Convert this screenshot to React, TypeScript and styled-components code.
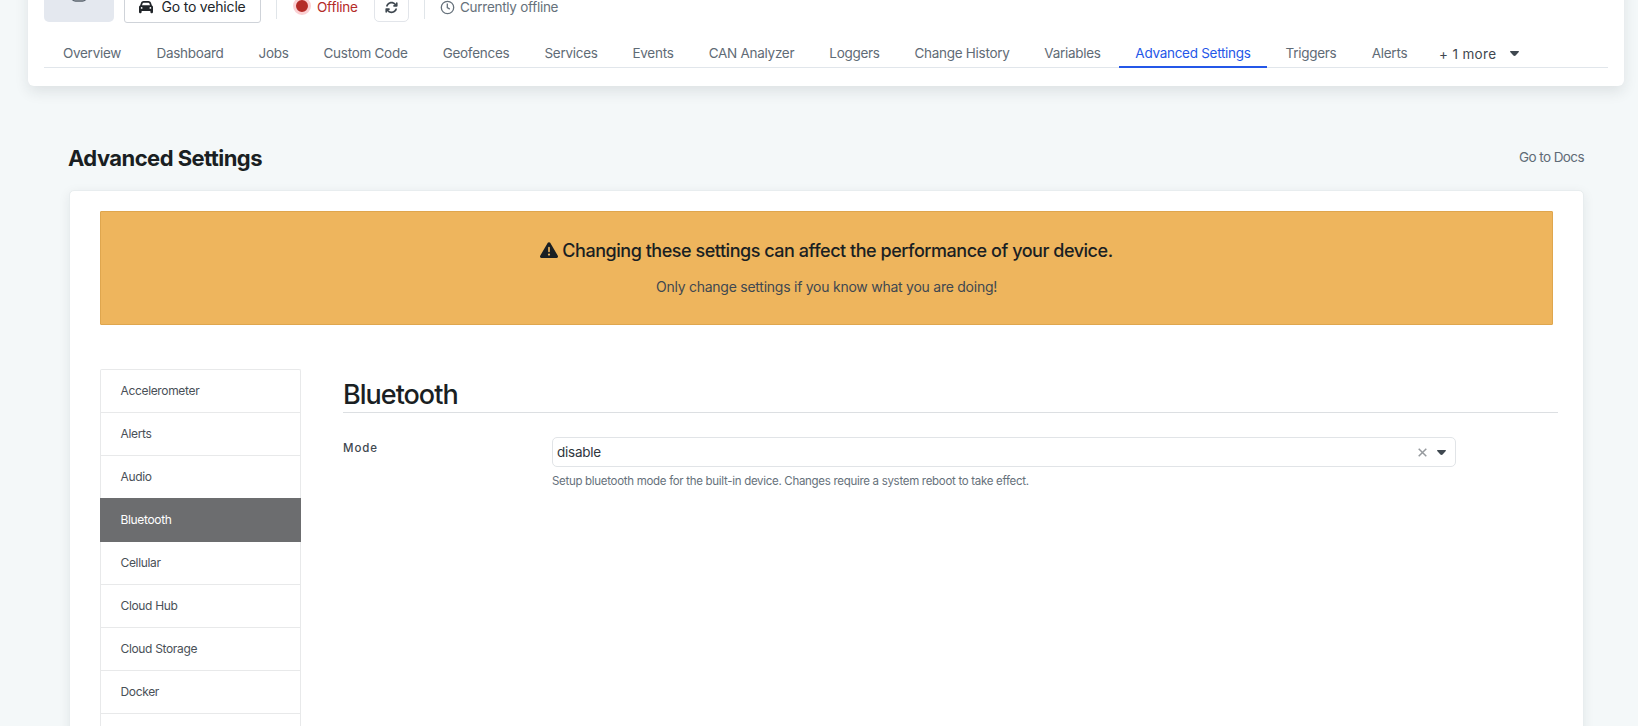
import React from "react";
import styled, { createGlobalStyle } from "styled-components";
import { FaCar, FaTriangleExclamation, FaArrowsRotate } from "react-icons/fa6";

const GlobalStyle = createGlobalStyle`
  * { box-sizing: border-box; }
  html, body { margin: 0; height: 726px; overflow: hidden; }
  body {
    background: #f4f8f9;
    color: #3f4850;
    font-family: Inter, "Liberation Sans", sans-serif;
    font-size: 14px;
  }
  button, a { font: inherit; color: inherit; text-decoration: none; white-space: nowrap; }
`;

const Page = styled.div`
  height: 726px;
  overflow: hidden;
  display: flex;
  flex-direction: column;
`;

const DeviceHeader = styled.header`
  flex: none;
  height: 126px;
  margin: -40px 14px 0 28px;
  padding: 0 16px 18px;
  background: #fff;
  border-radius: 6px;
  box-shadow: 0 6px 14px rgba(30, 40, 45, 0.1);
  display: flex;
  flex-direction: column;
`;

const StatusRow = styled.div`
  display: flex;
  align-items: flex-start;
  height: 63px;
`;

const Avatar = styled.div`
  width: 70px;
  height: 62px;
  border-radius: 5px;
  background: #e4e8ef;
  display: flex;
  justify-content: center;
  padding-top: 22px;
`;

const VehicleButton = styled.button`
  width: 137px;
  height: 33px;
  margin: 30px 0 0 10px;
  padding: 0;
  display: flex;
  align-items: center;
  justify-content: center;
  gap: 8px;
  background: #fff;
  border: 1px solid #cfd3d9;
  border-radius: 3px;
  color: #212529;
  line-height: 14px;
  letter-spacing: -0.18px;
`;

const Divider = styled.span`
  width: 1px;
  height: 40px;
  margin: 19px 0 0 15px;
  background: #e0e5e9;
`;

const Status = styled.div`
  display: flex;
  align-items: center;
  width: 81px;
  height: 20px;
  margin: 37px 0 0 16px;
  color: #b42b27;
  font-size: 13.5px;
  letter-spacing: -0.2px;
`;

const StatusDot = styled.span`
  width: 18px;
  height: 18px;
  margin: -2px 6px 0 0;
  border: 3px solid #fbd0d3;
  border-radius: 50%;
  background: #b42b27;
`;

const RefreshButton = styled.button`
  width: 35px;
  height: 34px;
  margin: 28px 0 0 0;
  padding: 4px 0 0;
  display: flex;
  align-items: center;
  justify-content: center;
  background: #fff;
  border: 1px solid #e2e5ea;
  border-radius: 5px;
  color: #3f4850;
`;

const Connection = styled.div`
  display: flex;
  align-items: center;
  gap: 5px;
  height: 20px;
  margin: 37px 0 0 15px;
  color: #66717b;
  font-size: 13.5px;
  letter-spacing: -0.28px;
`;

const Tabs = styled.nav`
  flex: none;
  display: flex;
  gap: 2px;
  height: 45px;
  padding-left: 2px;
  border-bottom: 1px solid #e1e6eb;
`;

const Tab = styled.a<{ $active?: boolean; $width: number }>`
  width: ${(p) => p.$width}px;
  height: 45px;
  padding-top: 22px;
  font-size: 13.5px;
  line-height: 17px;
  text-align: center;
  letter-spacing: -0.28px;
  color: ${(p) => (p.$active ? "#2457e8" : "#5f6b76")};
  border-bottom: ${(p) => (p.$active ? "2px solid #2457e8" : "0")};
`;

const MoreTab = styled.button`
  display: flex;
  align-items: center;
  gap: 14px;
  height: 17px;
  margin: 22px 0 0 13px;
  padding: 0;
  border: 0;
  background: none;
  color: #3f4850;
  font-size: 13.5px;
  letter-spacing: 0.35px;
`;

const TitleRow = styled.div`
  flex: none;
  display: flex;
  justify-content: space-between;
  align-items: center;
  height: 30px;
  margin: 57px 54px 0 68px;
`;

const PageTitle = styled.h1`
  margin: -1px 0 0;
  color: #1a1f23;
  font-size: 22px;
  font-weight: 700;
  letter-spacing: -0.55px;
`;

const DocsLink = styled.a`
  margin-top: -3px;
  color: #5f6b76;
  font-size: 13.5px;
  letter-spacing: -0.58px;
`;

const Card = styled.main`
  flex: none;
  height: 640px;
  margin: 17px 54px 0 69px;
  padding: 20px 30px;
  background: #fff;
  border: 1px solid #e8edef;
  border-radius: 5px;
  box-shadow: 0 3px 12px rgba(30, 40, 45, 0.08);
`;

const Warning = styled.section`
  height: 114px;
  padding-top: 27px;
  background: #eeb55d;
  border: 1px solid #dfa64e;
  border-radius: 1px;
  text-align: center;
`;

const WarningTitle = styled.h2`
  display: flex;
  justify-content: center;
  align-items: center;
  gap: 4px;
  margin: 0;
  height: 22px;
  color: #1a1f23;
  font-size: 18px;
  font-weight: 500;
  letter-spacing: -0.47px;
`;

const WarningText = styled.p`
  margin: 17px 0 0;
  line-height: 18px;
  color: #3f4850;
  letter-spacing: -0.25px;
`;

const Columns = styled.div`
  display: flex;
  align-items: flex-start;
  gap: 42px;
  margin: 44px -5px 0 0;
`;

const Sidebar = styled.nav`
  flex: none;
  width: 201px;
  height: 400px;
  border: 1px solid #e8e9ea;
  border-bottom: 0;
  border-radius: 2px 2px 0 0;
`;

const SideItem = styled.a<{ $active?: boolean }>`
  display: block;
  height: ${(p) => (p.$active ? 44 : 43)}px;
  margin: ${(p) => (p.$active ? "-1px -1px 0" : "0")};
  padding: ${(p) => (p.$active ? "1px 20.5px 0" : "0 19.5px")};
  border-bottom: 1px solid ${(p) => (p.$active ? "#6c6d6f" : "#e8e9ea")};
  background: ${(p) => (p.$active ? "#6c6d6f" : "transparent")};
  color: ${(p) => (p.$active ? "#fff" : "#495057")};
  font-size: 12px;
  line-height: 42px;
  letter-spacing: -0.34px;
`;

const Settings = styled.section`
  flex: 1;
`;

const SectionTitle = styled.h2`
  height: 44px;
  margin: 0 0 24px;
  padding-top: 9px;
  border-bottom: 1px solid #dcdfe2;
  color: #1a1f23;
  font-size: 27px;
  font-weight: 500;
  line-height: 34px;
  letter-spacing: -1px;
`;

const Field = styled.div`
  display: grid;
  grid-template-columns: 209px 904px;
`;

const FieldLabel = styled.label`
  padding-top: 3px;
  color: #3f4850;
  font-size: 11.5px;
  font-weight: 500;
  line-height: 17px;
  letter-spacing: 0.9px;
`;

const Select = styled.div`
  display: flex;
  align-items: center;
  height: 30px;
  padding: 0 9px 0 4px;
  border: 1px solid #e1e4e7;
  border-radius: 5px;
  color: #2f363d;
  font-size: 13.5px;
  letter-spacing: -0.25px;
`;

const SelectValue = styled.span`
  flex: 1;
`;

const ClearIcon = styled.svg`
  margin: 1px 10px 0 0;
`;

const HelpText = styled.p`
  margin: 6px 0 0;
  color: #66717b;
  font-size: 11.5px;
  line-height: 16px;
  letter-spacing: -0.3px;
`;

const Caret = () => (
  <svg width="9" height="5" viewBox="0 0 9 5">
    <path d="M.7 0h7.6c.6 0 .9.7.5 1.1L5.6 4.5c-.6.6-1.6.6-2.2 0L.2 1.1C-.2.7.1 0 .7 0z" fill="#3f4850" />
  </svg>
);

const tabs: { label: string; width: number }[] = [
  { label: "Overview", width: 92 },
  { label: "Dashboard", width: 100 },
  { label: "Jobs", width: 63 },
  { label: "Custom Code", width: 117 },
  { label: "Geofences", width: 100 },
  { label: "Services", width: 86 },
  { label: "Events", width: 74 },
  { label: "CAN Analyzer", width: 119 },
  { label: "Loggers", width: 83 },
  { label: "Change History", width: 128 },
  { label: "Variables", width: 89 },
  { label: "Advanced Settings", width: 148 },
  { label: "Triggers", width: 84 },
  { label: "Alerts", width: 69 },
];

const categories = ["Accelerometer", "Alerts", "Audio", "Bluetooth", "Cellular", "Cloud Hub", "Cloud Storage", "Docker"];

export default function App() {
  return (
    <>
      <GlobalStyle />
      <Page>
        <DeviceHeader>
          <StatusRow>
            <Avatar>
              <svg width="18" height="20" viewBox="0 0 18 20" fill="none" stroke="#59636e" strokeWidth="1.5">
                <rect x="1.5" y="3" width="15" height="16" rx="4" />
              </svg>
            </Avatar>
            <VehicleButton>
              <FaCar size={14} />
              Go to vehicle
            </VehicleButton>
            <Divider />
            <Status>
              <StatusDot />
              Offline
            </Status>
            <RefreshButton aria-label="Refresh">
              <FaArrowsRotate size={13} />
            </RefreshButton>
            <Divider />
            <Connection>
              <svg width="15" height="15" viewBox="0 0 15 15" fill="none" stroke="#66717b" strokeWidth="1.3">
                <circle cx="7.5" cy="7.5" r="6.2" />
                <path d="M7.3 3.6v4l2.5 1.5" />
              </svg>
              Currently offline
            </Connection>
          </StatusRow>
          <Tabs>
            {tabs.map((t) => (
              <Tab key={t.label} $width={t.width} $active={t.label === "Advanced Settings"}>
                {t.label}
              </Tab>
            ))}
            <MoreTab>
              + 1 more
              <Caret />
            </MoreTab>
          </Tabs>
        </DeviceHeader>

        <TitleRow>
          <PageTitle>Advanced Settings</PageTitle>
          <DocsLink>Go to Docs</DocsLink>
        </TitleRow>

        <Card>
          <Warning>
            <WarningTitle>
              <FaTriangleExclamation size={18} />
              Changing these settings can affect the performance of your device.
            </WarningTitle>
            <WarningText>Only change settings if you know what you are doing!</WarningText>
          </Warning>
          <Columns>
            <Sidebar>
              {categories.map((c) => (
                <SideItem key={c} $active={c === "Bluetooth"}>
                  {c}
                </SideItem>
              ))}
            </Sidebar>
            <Settings>
              <SectionTitle>Bluetooth</SectionTitle>
              <Field>
                <FieldLabel>Mode</FieldLabel>
                <div>
                  <Select>
                    <SelectValue>disable</SelectValue>
                    <ClearIcon width="9" height="9" viewBox="0 0 9 9" stroke="#969a9e" strokeWidth="1.5">
                      <path d="M.7.7l7.6 7.6M8.3.7L.7 8.3" />
                    </ClearIcon>
                    <Caret />
                  </Select>
                  <HelpText>Setup bluetooth mode for the built-in device. Changes require a system reboot to take effect.</HelpText>
                </div>
              </Field>
            </Settings>
          </Columns>
        </Card>
      </Page>
    </>
  );
}
